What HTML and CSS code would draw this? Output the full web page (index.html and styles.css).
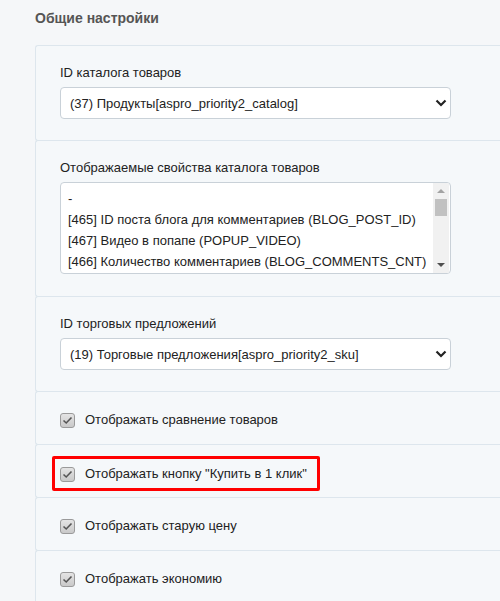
FILE: index.html
```html
<!DOCTYPE html>
<html lang="ru">
<head>
    <meta charset="UTF-8">
    <meta name="viewport" content="width=device-width, initial-scale=1.0">
    <title>Общие настройки</title>
    <link rel="stylesheet" href="styles.css">
</head>
<body>

    <div class="settings">
        <h2 class="settings-title">Общие настройки</h2>

        <!-- Каталог -->
        <div class="settings-card">
            <label class="field-label" for="catalog">ID каталога товаров</label>
            <div class="select-wrap">
                <select id="catalog" class="field-select">
                    <option>(37) Продукты[aspro_priority2_catalog]</option>
                </select>
                <svg class="select-arrow" width="12" height="8" viewBox="0 0 12 8"><path d="M1.5 1.5 L6 6 L10.5 1.5" fill="none" stroke="#222" stroke-width="2.2"/></svg>
            </div>
        </div>

        <!-- Свойства каталога -->
        <div class="settings-card multi-card">
            <div class="field-label">Отображаемые свойства каталога товаров</div>
            <div class="multi-select">
                <ul class="multi-options">
                    <li>-</li>
                    <li>[465] ID поста блога для комментариев (BLOG_POST_ID)</li>
                    <li>[467] Видео в попапе (POPUP_VIDEO)</li>
                    <li>[466] Количество комментариев (BLOG_COMMENTS_CNT)</li>
                </ul>
                <div class="scrollbar">
                    <span class="scroll-up"></span>
                    <span class="scroll-thumb"></span>
                    <span class="scroll-down"></span>
                </div>
            </div>
        </div>

        <!-- Торговые предложения -->
        <div class="settings-card">
            <label class="field-label" for="sku">ID торговых предложений</label>
            <div class="select-wrap">
                <select id="sku" class="field-select">
                    <option>(19) Торговые предложения[aspro_priority2_sku]</option>
                </select>
                <svg class="select-arrow" width="12" height="8" viewBox="0 0 12 8"><path d="M1.5 1.5 L6 6 L10.5 1.5" fill="none" stroke="#222" stroke-width="2.2"/></svg>
            </div>
        </div>

        <div class="settings-card check-card">
            <label class="check-row">
                <span class="checkbox"><svg width="11" height="9" viewBox="0 0 11 9"><path d="M1.5 4.5 L4.2 7 L9.5 1.5" fill="none" stroke="#555" stroke-width="1.6"/></svg></span>
                Отображать сравнение товаров
            </label>
        </div>

        <div class="settings-card check-card marked">
            <label class="check-row highlight">
                <span class="checkbox"><svg width="11" height="9" viewBox="0 0 11 9"><path d="M1.5 4.5 L4.2 7 L9.5 1.5" fill="none" stroke="#555" stroke-width="1.6"/></svg></span>
                Отображать кнопку "Купить в 1 клик"
            </label>
        </div>

        <div class="settings-card check-card">
            <label class="check-row">
                <span class="checkbox"><svg width="11" height="9" viewBox="0 0 11 9"><path d="M1.5 4.5 L4.2 7 L9.5 1.5" fill="none" stroke="#555" stroke-width="1.6"/></svg></span>
                Отображать старую цену
            </label>
        </div>

        <div class="settings-card check-card">
            <label class="check-row">
                <span class="checkbox"><svg width="11" height="9" viewBox="0 0 11 9"><path d="M1.5 4.5 L4.2 7 L9.5 1.5" fill="none" stroke="#555" stroke-width="1.6"/></svg></span>
                Отображать экономию
            </label>
        </div>
    </div>

</body>
</html>
```

FILE: styles.css
```css
body {
    font-family: 'Liberation Sans', Arial, sans-serif;
    margin: 0;
    padding: 0;
    background-color: #f5f7f9;
    color: #222;
    font-size: 13px;
}

.settings {
    padding-left: 35px;
}

.settings-title {
    margin: 0;
    height: 45px;
    line-height: 36px;
    font-size: 14px;
    font-weight: bold;
    color: #555;
}

/* карточки идут вплотную, общая граница 1px */
.settings-card {
    background: #f5f8fa;
    border: 1px solid #dde6ed;
    border-right: none;
    border-radius: 3px 0 0 3px;
    margin-bottom: -1px;
    padding: 18px 0 21px 24px;
}

.multi-card {
    padding-bottom: 22px;
}

.field-label {
    display: block;
    line-height: 18px;
    margin-bottom: 5px;
}

.select-wrap {
    position: relative;
    width: 391px;
}

.field-select {
    appearance: none;
    -webkit-appearance: none;
    width: 100%;
    height: 32px;
    padding: 0 30px 0 9px;
    border: 1px solid #c9d1d8;
    border-radius: 4px;
    background: #fff;
    font-family: inherit;
    font-size: 13px;
    color: #222;
}

.select-arrow {
    position: absolute;
    right: 4px;
    top: 12px;
}

.multi-select {
    display: flex;
    width: 389px;
    height: 90px;
    background: #fff;
    border: 1px solid #c9d1d8;
    border-radius: 4px;
    overflow: hidden;
}

.multi-options {
    flex: 1;
    list-style: none;
    margin: 0;
    padding: 5px 0 0 7px;
    line-height: 21px;
    color: #222;
    white-space: nowrap;
    overflow: hidden;
}

.scrollbar {
    width: 16px;
    background: #f1f1f1;
    display: flex;
    flex-direction: column;
    align-items: center;
    margin-right: 1px;
}

.scroll-up,
.scroll-down {
    width: 0;
    height: 0;
    border-left: 4px solid transparent;
    border-right: 4px solid transparent;
}

.scroll-up {
    margin-top: 6px;
    border-bottom: 4px solid #a3a3a3;
}

.scroll-down {
    margin-top: auto;
    margin-bottom: 6px;
    border-top: 4px solid #505050;
}

.scroll-thumb {
    width: 12px;
    height: 17px;
    margin-top: 6px;
    background: #c1c1c1;
}

.check-card {
    padding: 19px 0 15px 24px;
}

.check-row {
    display: flex;
    align-items: center;
    line-height: 18px;
}

.checkbox {
    width: 13px;
    height: 13px;
    margin-right: 10px;
    border: 1px solid #9a9a9a;
    border-radius: 3px;
    background: linear-gradient(#e4e4e4, #c9c9c9);
    display: flex;
    align-items: center;
    justify-content: center;
}

/* красная рамка вокруг пункта */
.check-card.marked {
    padding: 11px 0 6px 16px;
}

.highlight {
    display: inline-flex;
    border: 3px solid #f00;
    border-radius: 2px;
    padding: 6px 10px 5px 5px;
}
```
